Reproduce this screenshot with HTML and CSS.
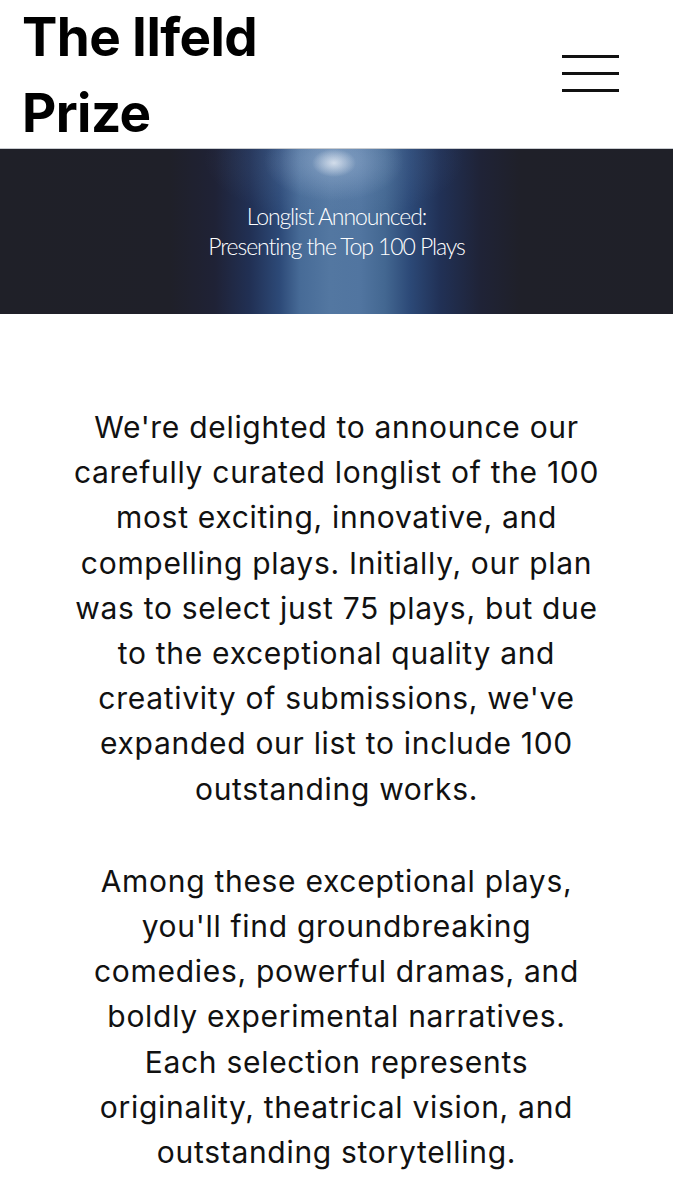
FILE: index.html
```html
<!DOCTYPE html>
<html lang="en">
<head>
<meta charset="utf-8">
<title>The Ilfeld Prize</title>
<link rel="stylesheet" href="styles.css">
</head>
<body>
<header class="site-header">
  <h1 class="logo">The Ilfeld<br>Prize</h1>
  <button class="menu" aria-label="Menu">
    <span class="bar"></span>
    <span class="bar"></span>
    <span class="bar"></span>
  </button>
</header>
<section class="banner">
  <div class="beam"></div>
  <p class="banner-text">Longlist Announced:<br>Presenting the Top 100 Plays</p>
</section>
<main class="content">
  <p class="copy">We're delighted to announce our<br>carefully curated longlist of the 100<br>most exciting, innovative, and<br>compelling plays. Initially, our plan<br>was to select just 75 plays, but due<br>to the exceptional quality and<br>creativity of submissions, we've<br>expanded our list to include 100<br>outstanding works.</p>
  <p class="copy">Among these exceptional plays,<br>you'll find groundbreaking<br>comedies, powerful dramas, and<br>boldly experimental narratives.<br>Each selection represents<br>originality, theatrical vision, and<br>outstanding storytelling.</p>
</main>
</body>
</html>
```
FILE: styles.css
```css
* { box-sizing: border-box; }
html, body { margin: 0; padding: 0; background: #fff; }
body { width: 673px; color: #000; overflow: hidden; }

.site-header {
  display: flex;
  justify-content: space-between;
  align-items: flex-start;
  height: 149px;
  padding: 0 0 0 22px;
  border-bottom: 1px solid #c9ccd0;
}
.logo {
  margin: 0;
  font-family: Inter, "Liberation Sans", sans-serif;
  font-weight: 700;
  font-size: 53px;
  line-height: 76px;
  letter-spacing: -0.6px;
  margin-top: -1px;
}
.menu {
  margin: 55px 54px 0 0;
  padding: 0;
  border: 0;
  background: none;
  width: 57px;
  display: flex;
  flex-direction: column;
  gap: 14px;
}
.bar {
  display: block;
  width: 57px;
  height: 3px;
  background: #111;
}

.banner {
  position: relative;
  height: 165px;
  overflow: hidden;
  background: #20212a;
  display: flex;
  align-items: center;
  justify-content: center;
}
.beam {
  position: absolute;
  inset: 0;
  background:
    radial-gradient(ellipse 22px 14px at 334px 14px, rgba(245,248,252,0.7), rgba(220,230,245,0) 100%),
    radial-gradient(ellipse 70px 40px at 334px 12px, rgba(190,210,235,0.4), rgba(160,185,220,0) 100%),
    radial-gradient(ellipse 130px 60px at 334px 10px, rgba(120,150,190,0.25), rgba(100,130,175,0) 100%),
    linear-gradient(90deg,
      #1f2028 0px, #1f2029 170px, #1f2236 215px, #213054 250px,
      #2d4a78 280px, #476b97 300px, #5377a1 330px, #5175a0 360px,
      #436791 385px, #2c4977 410px, #213156 440px, #1f2337 480px,
      #1f2029 520px, #1f2028 673px);
}
.banner-text {
  position: relative;
  margin: 0;
  text-align: center;
  color: #fff;
  font-family: Lato, "Open Sans", sans-serif;
  font-weight: 300;
  font-size: 23px;
  line-height: 30px;
  letter-spacing: -1.1px;
  margin-top: -2px;
}

.content {
  padding: 91px 20px 0;
}
.copy {
  margin: 0 0 47px;
  text-align: center;
  font-family: Inter, "Liberation Sans", sans-serif;
  font-weight: 400;
  font-size: 30px;
  line-height: 45.2px;
  letter-spacing: 0.7px;
  color: #111;
}
```
